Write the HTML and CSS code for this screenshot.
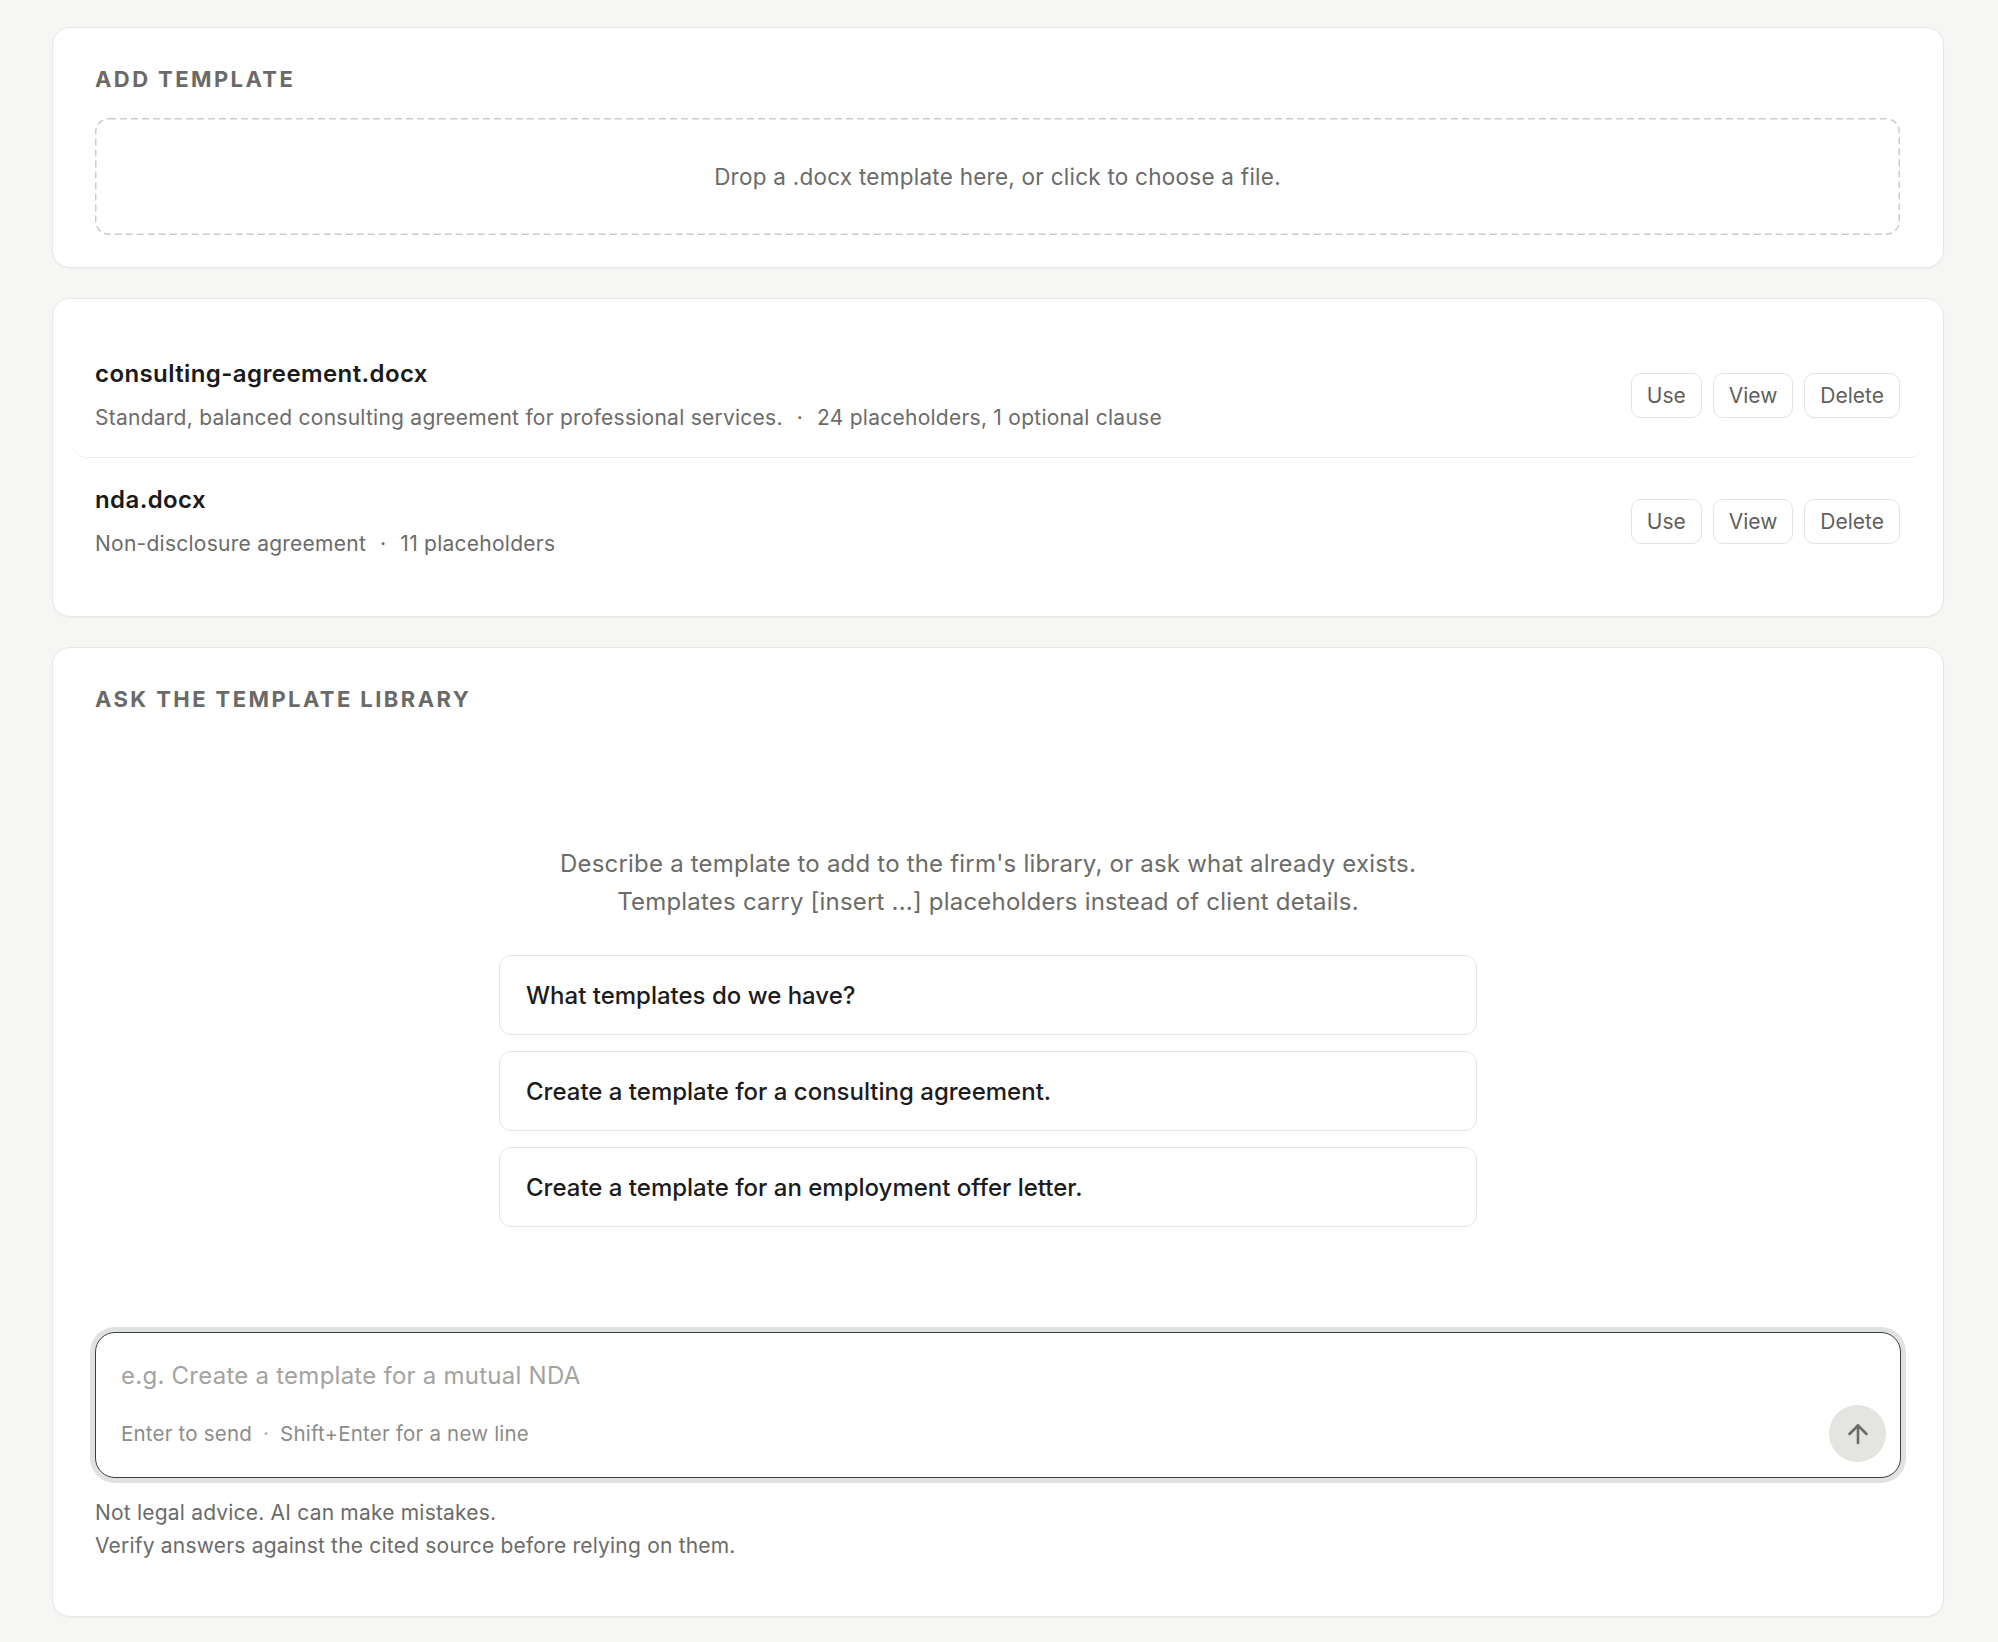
FILE: index.html
```html
<!DOCTYPE html>
<html lang="en">
<head>
<meta charset="utf-8">
<title>Templates</title>
<link rel="stylesheet" href="styles.css">
</head>
<body>
<main class="page">
  <section class="card card-add">
    <h2 class="section-title">Add template</h2>
    <div class="dropzone">Drop a .docx template here, or click to choose a file.</div>
  </section>

  <section class="card card-list">
    <div class="tpl-row">
      <div class="tpl-info">
        <div class="tpl-name">consulting-agreement.docx</div>
        <div class="tpl-meta">Standard, balanced consulting agreement for professional services.<span class="sep">·</span>24 placeholders, 1 optional clause</div>
      </div>
      <div class="tpl-actions">
        <button class="btn">Use</button>
        <button class="btn">View</button>
        <button class="btn">Delete</button>
      </div>
    </div>
    <div class="tpl-row">
      <div class="tpl-info">
        <div class="tpl-name">nda.docx</div>
        <div class="tpl-meta">Non-disclosure agreement<span class="sep">·</span>11 placeholders</div>
      </div>
      <div class="tpl-actions">
        <button class="btn">Use</button>
        <button class="btn">View</button>
        <button class="btn">Delete</button>
      </div>
    </div>
  </section>

  <section class="card card-ask">
    <h2 class="section-title">Ask the template library</h2>
    <div class="messages">
      <div class="empty">
        <p class="intro">Describe a template to add to the firm's library, or ask what already exists.<br>Templates carry [insert ...] placeholders instead of client details.</p>
        <div class="suggestions">
          <button class="suggestion">What templates do we have?</button>
          <button class="suggestion">Create a template for a consulting agreement.</button>
          <button class="suggestion">Create a template for an employment offer letter.</button>
        </div>
      </div>
    </div>
    <div class="composer">
      <div class="placeholder">e.g. Create a template for a mutual NDA</div>
      <div class="composer-bar">
        <div class="hint">Enter to send<span class="hint-sep">·</span>Shift+Enter for a new line</div>
        <button class="send" aria-label="Send">
          <svg width="22" height="22" viewBox="0 0 22 22" fill="none" stroke="#6b6b68" stroke-width="2.6" stroke-linecap="round" stroke-linejoin="round"><path d="M11 20V2.5"/><path d="M2.5 11L11 2.5L19.5 11"/></svg>
        </button>
      </div>
    </div>
    <div class="disclaimer">Not legal advice. AI can make mistakes.<br>Verify answers against the cited source before relying on them.</div>
  </section>
</main>
</body>
</html>
```

FILE: styles.css
```css
* { box-sizing: border-box; }

html, body {
  margin: 0;
  padding: 0;
  background: #f6f6f4;
}

body {
  font-family: Inter, "Liberation Sans", sans-serif;
  color: #1c1c1c;
}

.page {
  width: 1892px;
  margin: 0 0 0 52px;
  padding: 27px 0 27px;
  display: flex;
  flex-direction: column;
  gap: 30px;
}

.card {
  background: #ffffff;
  border: 1px solid #e7e7e4;
  border-radius: 18px;
  box-shadow: 0 1px 2px rgba(0, 0, 0, 0.035);
}

.section-title {
  margin: 0;
  font-size: 22px;
  line-height: 26px;
  font-weight: 700;
  letter-spacing: 0.11em;
  text-transform: uppercase;
  color: #6a6a68;
}

/* Add template */
.card-add {
  padding: 38px 43px 32px 42px;
}

.dropzone {
  margin-top: 26px;
  height: 117px;
  border-radius: 14px;
  background-image: url("data:image/svg+xml,%3Csvg xmlns='http://www.w3.org/2000/svg' width='100%25' height='100%25'%3E%3Crect width='100%25' height='100%25' fill='none' rx='14' ry='14' stroke='%23CCCCC9' stroke-width='3' stroke-dasharray='7%2C4'/%3E%3C/svg%3E");
  display: flex;
  align-items: center;
  justify-content: center;
  font-size: 22.5px;
  letter-spacing: 0.25px;
  color: #6b6b69;
}

/* Template list */
.card-list {
  padding: 33px 20px 33px;
}

.tpl-row {
  display: flex;
  align-items: center;
  justify-content: space-between;
  padding: 26px 23px 24px 22px;
  border-bottom: 1px solid #ececea;
  border-radius: 14px;
}

.tpl-row:last-child {
  border-bottom: none;
}

.tpl-name {
  font-size: 24px;
  line-height: 32px;
  font-weight: 600;
  letter-spacing: 0.4px;
  color: #1a1a1a;
}

.tpl-meta {
  margin-top: 13px;
  font-size: 21px;
  line-height: 30px;
  letter-spacing: 0.25px;
  color: #6b6b69;
}

.sep {
  margin: 0 14px;
}

.tpl-actions {
  display: flex;
  gap: 11px;
}

.btn {
  height: 45px;
  padding: 0 15px;
  background: #fff;
  border: 1px solid #e3e3e0;
  border-radius: 10px;
  font-family: inherit;
  font-size: 21px;
  color: #5f5f5c;
}

/* Ask */
.card-ask {
  padding: 38px 42px 54px 42px;
}

.messages {
  padding: 133px 20px 105px 0;
}

.empty {
  width: 978px;
  margin: 0 auto;
  display: flex;
  flex-direction: column;
  align-items: stretch;
}

.intro {
  margin: 0;
  text-align: center;
  font-size: 24px;
  line-height: 38px;
  letter-spacing: 0.2px;
  color: #6b6b68;
}

.suggestions {
  margin-top: 34px;
  display: flex;
  flex-direction: column;
  gap: 16px;
}

.suggestion {
  display: block;
  width: 100%;
  height: 80px;
  padding: 0 26px;
  text-align: left;
  background: #fff;
  border: 1px solid #e6e6e3;
  border-radius: 12px;
  font-family: inherit;
  font-size: 24px;
  font-weight: 500;
  color: #1c1c1c;
}

.composer {
  border: 1.5px solid #3b4040;
  border-radius: 20px;
  box-shadow: 0 0 0 5px #dfe2e1;
  padding: 25px 14px 15px 25px;
  background: #fff;
}

.placeholder {
  font-size: 24px;
  line-height: 36px;
  letter-spacing: 0.25px;
  color: #a3a3a1;
}

.composer-bar {
  margin-top: 11px;
  display: flex;
  align-items: center;
  justify-content: space-between;
}

.hint {
  font-size: 20.5px;
  line-height: 24px;
  letter-spacing: 0.2px;
  color: #8c8c8a;
}

.hint-sep {
  margin: 0 11px;
  color: #b5b5b3;
}

.send {
  width: 57px;
  height: 57px;
  border-radius: 50%;
  border: none;
  background: #e4e4e1;
  display: flex;
  align-items: center;
  justify-content: center;
  padding: 0;
}

.disclaimer {
  margin-top: 18px;
  font-size: 21px;
  line-height: 33px;
  letter-spacing: 0.2px;
  color: #6b6b69;
}
```
